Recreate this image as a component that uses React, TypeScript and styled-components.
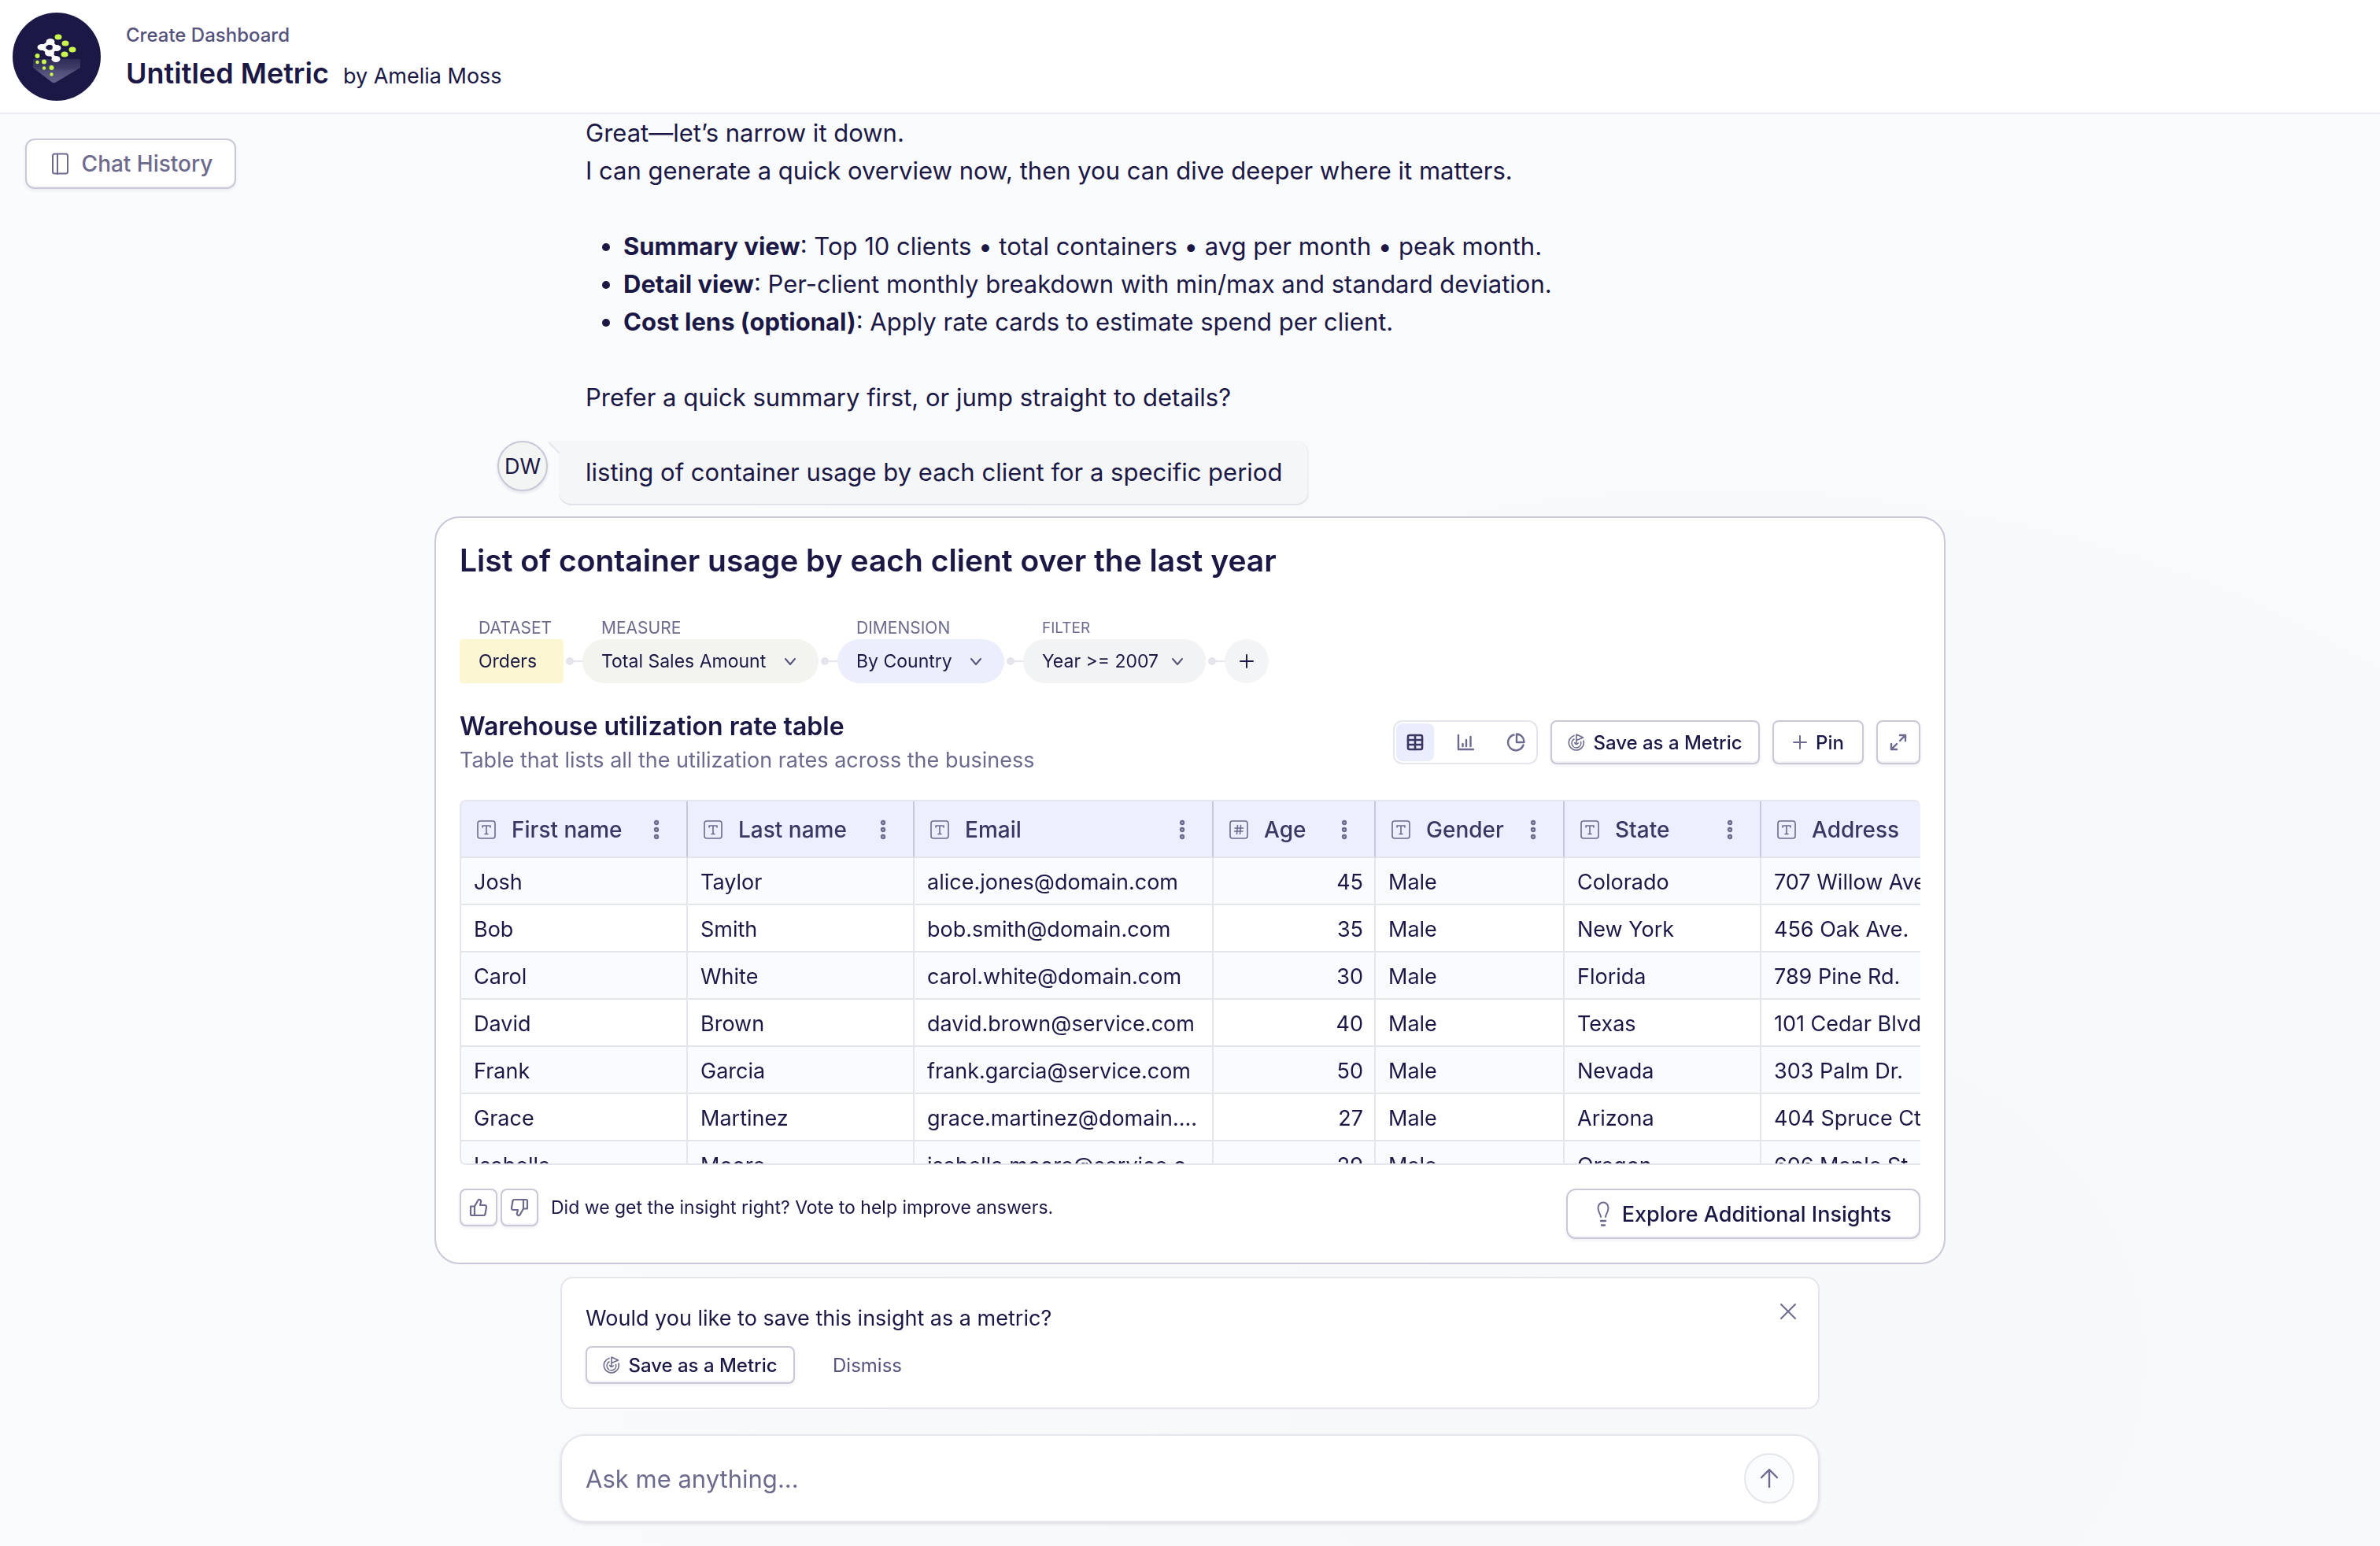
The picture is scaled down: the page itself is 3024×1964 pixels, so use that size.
import React from "react";
import styled, { createGlobalStyle } from "styled-components";

const c = {
  navy: "#1b1846",
  ink: "#3a3862",
  soft: "#55537d",
  muted: "#6c6a8d",
  line: "#c9c8d6",
  faint: "#e5e5ec",
  lilac: "#ecefff",
};

const GlobalStyle = createGlobalStyle`
  *, *::before, *::after { box-sizing: border-box; }
  body {
    margin: 0;
    font-family: Inter, "Liberation Sans", sans-serif;
    color: ${c.navy};
    background: #fafbfd;
  }
  h1, h2, h3, p, ul { margin: 0; }
  button, input, select { font-family: inherit; color: inherit; }
`;

const Page = styled.div`
  min-height: 100vh;
  display: flex;
  flex-direction: column;
  background: radial-gradient(ellipse at 72% 88%, #f7f8fa 0%, #f8f9fb 35%, #fafbfd 62%);
`;

const Header = styled.header`
  display: flex;
  align-items: center;
  gap: 32px;
  height: 145px;
  padding: 0 16px;
  background: #fff;
  border-bottom: 2px solid #e9edfb;
`;

const HeaderText = styled.div`
  display: flex;
  flex-direction: column;
  gap: 8px;
  padding-top: 4px;
`;

const Crumb = styled.a`
  font-size: 24px;
  line-height: 32px;
  font-weight: 500;
  color: ${c.soft};
  text-decoration: none;
`;

const TitleRow = styled.div`
  display: flex;
  align-items: baseline;
  gap: 18px;
`;

const PageTitle = styled.h1`
  font-size: 36px;
  line-height: 48px;
  font-weight: 600;
`;

const Author = styled.span`
  font-size: 27px;
  line-height: 44px;
`;

const Body = styled.div`
  flex: 1;
  display: grid;
  grid-template-columns: minmax(0, 1fr) minmax(0, 1920px) minmax(0, 1fr);
`;

const Side = styled.aside`
  padding: 31px 32px;
`;

const Button = styled.button<{ $h?: number; $w?: number; $size?: number; $gap?: number }>`
  display: inline-flex;
  align-items: center;
  justify-content: center;
  gap: ${(p) => p.$gap ?? 8}px;
  height: ${(p) => p.$h ?? 56}px;
  ${(p) => (p.$w ? `width: ${p.$w}px;` : "")}
  padding: 0;
  font-size: ${(p) => p.$size ?? 24}px;
  font-weight: 500;
  white-space: nowrap;
  background: #fff;
  border: 2px solid ${c.line};
  border-radius: 8px;
  box-shadow: 0 2px 4px rgba(27, 24, 70, 0.07), inset 0 -2px 0 #f3f3f6;
`;

const HistoryButton = styled(Button)`
  color: ${c.muted};
  border-radius: 12px;
`;

const ExploreButton = styled(Button)`
  border-radius: 12px;
`;

const TextButton = styled.button`
  height: 48px;
  padding: 0 24px;
  border: 0;
  background: none;
  font-size: 24px;
  color: ${c.soft};
`;

const Thread = styled.main`
  display: flex;
  flex-direction: column;
`;

const Answer = styled.section`
  padding: 0 192px 31px;
  font-size: 31px;
  line-height: 48px;
`;

const Points = styled.ul`
  margin: 48px 0;
  padding-left: 48px;
`;

const UserRow = styled.div`
  display: flex;
  gap: 14px;
  padding-left: 80px;
  margin-bottom: 16px;
`;

const Avatar = styled.div`
  display: grid;
  place-items: center;
  width: 64px;
  height: 64px;
  font-size: 27px;
  background: #f3f4f4;
  border: 2px solid ${c.line};
  border-radius: 50%;
  box-shadow: 0 2px 4px rgba(27, 24, 70, 0.12);
`;

const Bubble = styled.div`
  position: relative;
  padding: 16px 32px 16px 34px;
  font-size: 31px;
  line-height: 48px;
  background: #f5f6f8;
  border-right: 2px solid #eeeff4;
  border-radius: 0 16px 16px 16px;
  box-shadow: 0 2px 0 #e1e2ea;
`;

const Tail = styled.svg`
  position: absolute;
  left: -14px;
  top: 0;
`;

const Card = styled.section`
  padding: 30px;
  background: #fff;
  border: 2px solid ${c.line};
  border-radius: 32px;
`;

const CardTitle = styled.h2`
  font-size: 39px;
  line-height: 48px;
  font-weight: 600;
  margin-bottom: 50px;
`;

const Steps = styled.div`
  display: flex;
  align-items: flex-end;
  margin-bottom: 34px;
`;

const Step = styled.div`
  display: flex;
  flex-direction: column;
  gap: 2px;
`;

const StepLabel = styled.label<{ $small?: boolean }>`
  padding-left: 24px;
  font-size: ${(p) => (p.$small ? 19 : 21)}px;
  line-height: 24px;
  color: ${c.muted};
`;

const Dataset = styled.output`
  width: 132px;
  padding-left: 24px;
  font-size: 23px;
  line-height: 56px;
  background: #fcf6d3;
  border-radius: 4px;
`;

const PillWrap = styled.div`
  position: relative;
`;

const PillSelect = styled.select<{ $w: number; $bg: string }>`
  display: block;
  appearance: none;
  width: ${(p) => p.$w}px;
  height: 56px;
  padding: 0 0 0 24px;
  font-size: 23px;
  background: ${(p) => p.$bg};
  border: 0;
  border-radius: 28px;
`;

const PillChevron = styled.svg`
  position: absolute;
  right: 28px;
  top: 24px;
  pointer-events: none;
`;

const Link = styled.span`
  display: flex;
  align-items: center;
  width: 24px;
  height: 56px;
  padding-left: 3px;
  &::before {
    content: "";
    width: 10px;
    height: 10px;
    border-radius: 50%;
    background: #e4e4ec;
  }
  &::after {
    content: "";
    flex: 1;
    height: 2px;
    background: #e4e4ec;
  }
`;

const AddStep = styled.button`
  display: grid;
  place-items: center;
  width: 56px;
  height: 56px;
  padding: 0;
  border: 0;
  border-radius: 50%;
  background: #f3f4f5;
`;

const Between = styled.div<{ $start?: boolean }>`
  display: flex;
  justify-content: space-between;
  align-items: ${(p) => (p.$start ? "flex-start" : "center")};
`;

const SectionTitle = styled.h3`
  font-size: 32px;
  line-height: 42px;
  font-weight: 600;
  margin-bottom: 4px;
`;

const SectionNote = styled.p`
  font-size: 27px;
  line-height: 36px;
  color: ${c.muted};
`;

const Row = styled.div<{ $gap: number }>`
  display: flex;
  align-items: center;
  gap: ${(p) => p.$gap}px;
`;

const Toggle = styled.div`
  display: flex;
  align-items: center;
  gap: 16px;
  height: 56px;
  padding: 2px;
  border: 2px solid ${c.faint};
  border-radius: 12px;
`;

const ToggleItem = styled.button<{ $on?: boolean }>`
  display: grid;
  place-items: center;
  width: 48px;
  height: 48px;
  padding: 0;
  border: 0;
  border-radius: 8px;
  color: ${(p) => (p.$on ? c.ink : c.muted)};
  background: ${(p) => (p.$on ? "#e9edfd" : "#fff")};
`;

const TableFrame = styled.div`
  height: 464px;
  margin: 32px 0 30px;
  overflow: auto;
  scrollbar-width: none;
  border: 2px solid ${c.faint};
  border-right: 0;
  border-radius: 8px 8px 0 8px;
`;

const Table = styled.table`
  width: 1952px;
  table-layout: fixed;
  border-collapse: separate;
  border-spacing: 0;
  line-height: 36px;
`;

const Col = styled.col<{ $w: number }>`
  width: ${(p) => p.$w}px;
`;

const Th = styled.th`
  height: 72px;
  padding: 2px 34px 0 20px;
  font-size: 28px;
  font-weight: 500;
  color: ${c.ink};
  background: ${c.lilac};
  border-right: 2px solid ${c.line};
  border-bottom: 2px solid ${c.faint};
`;

const Tr = styled.tr`
  background: #fff;
  &:nth-child(odd) { background: #fafbff; }
`;

const Td = styled.td<{ $num?: boolean }>`
  height: 60px;
  padding: ${(p) => (p.$num ? "3px 14px 0 16px" : "3px 6px 0 16px")};
  font-size: 27px;
  text-align: ${(p) => (p.$num ? "right" : "left")};
  white-space: nowrap;
  overflow: hidden;
  text-overflow: ellipsis;
  border-right: 2px solid ${c.faint};
  border-bottom: 2px solid ${c.faint};
`;

const MenuButton = styled.button`
  display: grid;
  place-items: center;
  padding: 0;
  border: 0;
  background: none;
  color: ${c.muted};
`;

const VoteText = styled.p`
  padding-left: 12px;
  font-size: 23px;
  line-height: 48px;
`;

const Prompts = styled.div`
  padding: 16px 160px 30px;
  display: flex;
  flex-direction: column;
  gap: 32px;
`;

const Hint = styled.section`
  display: flex;
  justify-content: space-between;
  align-items: flex-start;
  height: 168px;
  padding: 30px 28px 30px 30px;
  background: #fff;
  border: 2px solid ${c.faint};
  border-radius: 16px;
`;

const HintText = styled.p`
  font-size: 27px;
  line-height: 42px;
  margin-bottom: 14px;
`;

const CloseButton = styled.button`
  display: grid;
  place-items: center;
  width: 20px;
  height: 24px;
  padding: 0;
  border: 0;
  background: none;
  color: ${c.muted};
`;

const AskForm = styled.form`
  display: flex;
  align-items: center;
  height: 112px;
  padding: 0 30px;
  background: #fff;
  border: 2px solid ${c.faint};
  border-radius: 32px;
  box-shadow: 0 2px 4px rgba(27, 24, 70, 0.12);
`;

const AskInput = styled.input`
  flex: 1;
  padding: 0;
  border: 0;
  outline: 0;
  background: none;
  font-size: 31px;
  &::placeholder { color: ${c.muted}; opacity: 1; }
`;

const SendButton = styled.button`
  display: grid;
  place-items: center;
  width: 64px;
  height: 64px;
  padding: 0;
  color: ${c.muted};
  background: #fbfcfe;
  border: 2px solid ${c.faint};
  border-radius: 50%;
`;

type IconProps = { w: number; h?: number; sw?: number; color?: string; children: React.ReactNode };
const Icon = ({ w, h = w, sw = 2, color = "currentColor", children }: IconProps) => (
  <svg width={w} height={h} viewBox={`0 0 ${w} ${h}`} fill="none" stroke={color} strokeWidth={sw} strokeLinecap="round" strokeLinejoin="round" aria-hidden="true">
    {children}
  </svg>
);

const Logo = () => (
  <svg width="112" height="112" viewBox="16 16 112 112" role="img" aria-label="Home">
    <defs>
      <linearGradient id="tray" x1="0" y1="0" x2="0" y2="1">
        <stop offset="0" stopColor="#2e2b58" />
        <stop offset="0.4" stopColor="#413e69" />
        <stop offset="0.5" stopColor="#504e78" />
        <stop offset="1" stopColor="#64628a" />
      </linearGradient>
    </defs>
    <circle cx="72" cy="72" r="56" fill={c.navy} />
    <path d="M42 75H102V86L71 104.500Q68.500 106 66 104.500L42 86Z" fill="url(#tray)" />
    <g fill="#fff">
      <ellipse cx="64" cy="53" rx="5.500" ry="4" />
      <ellipse cx="53" cy="60" rx="5.500" ry="4" />
      <ellipse cx="72" cy="61" rx="5.500" ry="4" />
      <ellipse cx="63" cy="67.500" rx="6" ry="4" />
      <ellipse cx="71" cy="75" rx="5.500" ry="4" />
    </g>
    <path d="M53 60L64 53M54 61L64 68M72 61L63 67M64 68L71 75M65 54L71 60" stroke="#fff" strokeWidth="4" />
    <g fill="#c9f64a">
      <ellipse cx="74" cy="47" rx="4.500" ry="3.500" />
      <ellipse cx="83" cy="55" rx="4.500" ry="3.500" />
      <ellipse cx="92" cy="63" rx="4.500" ry="3.500" />
      <ellipse cx="82" cy="69" rx="4.500" ry="3.500" />
      <circle cx="47.500" cy="71" r="3" />
      <circle cx="47.500" cy="79" r="2.200" />
      <circle cx="56" cy="78.500" r="3" />
      <circle cx="56" cy="86.500" r="2.200" />
      <circle cx="65.500" cy="86" r="3" />
      <circle cx="65.500" cy="94.500" r="2.200" />
    </g>
  </svg>
);

const PanelIcon = () => (
  <Icon w={28}><rect x="5" y="1.500" width="19" height="25" rx="2.500" /><path d="M11 2V27" /></Icon>
);
const GoalIcon = () => (
  <Icon w={22} color={c.muted} sw={1.6}>
    <path d="M8 2.400A9.500 9.500 0 1 0 20 9" />
    <path d="M8 7A5.800 5.800 0 1 0 16.500 10.500" />
    <path d="M11 12.500V1L19.500 5L11 8.500" />
    <path d="M8.800 11.500A2.400 2.400 0 0 0 13.300 12" />
  </Icon>
);
const TableIcon = () => (
  <Icon w={22} sw={2.6}><rect x="2" y="2" width="18" height="18" rx="2" /><path d="M2 8H20M2 14H20M11 2V20" /></Icon>
);
const ChartIcon = () => (
  <Icon w={22} sw={2.4}><path d="M2 2V20H21M7.500 16V13M12 16V8M17.500 16V4" /></Icon>
);
const PieIcon = () => (
  <Icon w={24} sw={2.4}><path d="M9.500 2.500A10 10 0 1 0 21.500 15.500" /><path d="M13 1.500V12H22.500A10 10 0 0 0 13 1.500Z" /></Icon>
);
const PlusIcon = ({ size, color }: { size: number; color: string }) => (
  <Icon w={size} color={color}><path d={`M${size / 2} 2V${size - 2}M2 ${size / 2}H${size - 2}`} /></Icon>
);
const ExpandIcon = () => (
  <Icon w={24} color={c.muted} sw={2.4}><path d="M14 3H21V10M21 3L14 10M3 14V21H10M3 21L10 14" /></Icon>
);
const TextIcon = () => (
  <Icon w={24} color={c.muted} sw={1.6}><rect x="1" y="1" width="22" height="22" rx="3" /><path d="M7 9V7H17V9M12 7V17.500M10 17.500H14" /></Icon>
);
const NumberIcon = () => (
  <Icon w={24} color={c.muted} sw={1.6}><rect x="1" y="1" width="22" height="22" rx="3" /><path d="M10.500 6.500L9.500 17.500M14.500 6.500L13.500 17.500M7 10H17.500M6.500 14H17" /></Icon>
);
const DotsIcon = () => (
  <Icon w={8} h={26} sw={2.4}><circle cx="4" cy="4" r="2" /><circle cx="4" cy="13" r="2" /><circle cx="4" cy="22" r="2" /></Icon>
);
const ThumbIcon = ({ down }: { down?: boolean }) => (
  <Icon w={24} color={c.muted} sw={2.2}>
    <g transform={down ? "rotate(180 12 12)" : undefined}>
      <path d="M2 10.500H7V22H3.500A1.500 1.500 0 0 1 2 20.500Z" />
      <path d="M7 10.500L11 3.500Q12 1.200 14 2.200Q15.500 3 15 5L14 9H20A2 2 0 0 1 22 11.300L20.500 20.200A2 2 0 0 1 18.500 22H7" />
    </g>
  </Icon>
);
const BulbIcon = () => (
  <Icon w={20} h={36} color={c.muted}>
    <path d="M7 22C7 18.500 3.500 16.500 3.500 10.500A6.500 7 0 0 1 16.500 10.500C16.500 16.500 13 18.500 13 22" />
    <path d="M7 27H13M8 32.500H12" strokeWidth="2.400" />
  </Icon>
);

const DropPill = ({ id, label, value, w, bg, small }: { id: string; label: string; value: string; w: number; bg: string; small?: boolean }) => (
  <>
    <Link />
    <Step>
      <StepLabel htmlFor={id} $small={small}>{label}</StepLabel>
      <PillWrap>
        <PillSelect id={id} $w={w} $bg={bg} defaultValue={value}>
          <option>{value}</option>
        </PillSelect>
        <PillChevron width="16" height="10" viewBox="0 0 16 10" fill="none" stroke={c.soft} strokeWidth="2" strokeLinecap="round" strokeLinejoin="round">
          <path d="M2 1L8 8L14 1" />
        </PillChevron>
      </PillWrap>
    </Step>
  </>
);

const columns = [
  { name: "First name", w: 288 },
  { name: "Last name", w: 288 },
  { name: "Email", w: 380 },
  { name: "Age", w: 206, num: true },
  { name: "Gender", w: 240 },
  { name: "State", w: 250 },
  { name: "Address", w: 300 },
];

const rows = [
  ["Josh", "Taylor", "alice.jones@domain.com", "45", "Male", "Colorado", "707 Willow Ave."],
  ["Bob", "Smith", "bob.smith@domain.com", "35", "Male", "New York", "456 Oak Ave."],
  ["Carol", "White", "carol.white@domain.com", "30", "Male", "Florida", "789 Pine Rd."],
  ["David", "Brown", "david.brown@service.com", "40", "Male", "Texas", "101 Cedar Blvd."],
  ["Frank", "Garcia", "frank.garcia@service.com", "50", "Male", "Nevada", "303 Palm Dr."],
  ["Grace", "Martinez", "grace.martinez@domain.com", "27", "Male", "Arizona", "404 Spruce Ct."],
  ["Isabella", "Moore", "isabella.moore@service.com", "29", "Male", "Oregon", "606 Maple St."],
];

export default function App() {
  return (
    <>
      <GlobalStyle />
      <Page>
        <Header>
          <Logo />
          <HeaderText>
            <Crumb href="#">Create Dashboard</Crumb>
            <TitleRow>
              <PageTitle>Untitled Metric</PageTitle>
              <Author>by Amelia Moss</Author>
            </TitleRow>
          </HeaderText>
        </Header>
        <Body>
          <Side>
            <HistoryButton $h={64} $w={268} $size={28} $gap={14}><PanelIcon />Chat History</HistoryButton>
          </Side>
          <Thread>
            <Answer>
              <p>Great—let’s narrow it down.</p>
              <p>I can generate a quick overview now, then you can dive deeper where it matters.</p>
              <Points>
                <li><b>Summary view</b>: Top 10 clients • total containers • avg per month • peak month.</li>
                <li><b>Detail view</b>: Per-client monthly breakdown with min/max and standard deviation.</li>
                <li><b>Cost lens (optional)</b>: Apply rate cards to estimate spend per client.</li>
              </Points>
              <p>Prefer a quick summary first, or jump straight to details?</p>
            </Answer>
            <UserRow>
              <Avatar>DW</Avatar>
              <Bubble>
                <Tail width="18" height="18" viewBox="0 0 18 18">
                  <path d="M0 0H18V17H16Z" fill="#f5f6f8" />
                  <path d="M1 2L15 16" stroke="#e6e7ee" strokeWidth="2" />
                </Tail>
                listing of container usage by each client for a specific period
              </Bubble>
            </UserRow>
            <Card>
              <CardTitle>List of container usage by each client over the last year</CardTitle>
              <Steps>
                <Step>
                  <StepLabel htmlFor="dataset">DATASET</StepLabel>
                  <Dataset id="dataset">Orders</Dataset>
                </Step>
                <DropPill id="measure" label="MEASURE" value="Total Sales Amount" w={300} bg="#f3f4f0" />
                <DropPill id="dimension" label="DIMENSION" value="By Country" w={212} bg="#eceefb" />
                <DropPill id="filter" label="FILTER" value="Year >= 2007" w={232} bg="#f2f3f4" small />
                <Link />
                <AddStep aria-label="Add step"><PlusIcon size={20} color={c.navy} /></AddStep>
              </Steps>
              <Between>
                <div>
                  <SectionTitle>Warehouse utilization rate table</SectionTitle>
                  <SectionNote>Table that lists all the utilization rates across the business</SectionNote>
                </div>
                <Row $gap={16}>
                  <Toggle>
                    <ToggleItem $on aria-label="Table"><TableIcon /></ToggleItem>
                    <ToggleItem aria-label="Bar chart"><ChartIcon /></ToggleItem>
                    <ToggleItem aria-label="Pie chart"><PieIcon /></ToggleItem>
                  </Toggle>
                  <Button $w={266} $gap={10}><GoalIcon />Save as a Metric</Button>
                  <Button $w={116} $gap={10}><PlusIcon size={20} color={c.muted} />Pin</Button>
                  <Button $w={56} aria-label="Expand"><ExpandIcon /></Button>
                </Row>
              </Between>
              <TableFrame>
                <Table>
                  <colgroup>{columns.map((col) => <Col key={col.name} $w={col.w} />)}</colgroup>
                  <thead>
                    <tr>
                      {columns.map((col) => (
                        <Th key={col.name} scope="col">
                          <Between>
                            <Row $gap={20}>{col.num ? <NumberIcon /> : <TextIcon />}{col.name}</Row>
                            <MenuButton aria-label={`${col.name} options`}><DotsIcon /></MenuButton>
                          </Between>
                        </Th>
                      ))}
                    </tr>
                  </thead>
                  <tbody>
                    {rows.map((row) => (
                      <Tr key={row[0]}>
                        {row.map((cell, i) => <Td key={i} $num={columns[i].num}>{cell}</Td>)}
                      </Tr>
                    ))}
                  </tbody>
                </Table>
              </TableFrame>
              <Between $start>
                <Row $gap={4}>
                  <Button $h={48} $w={48} aria-label="Yes"><ThumbIcon /></Button>
                  <Button $h={48} $w={48} aria-label="No"><ThumbIcon down /></Button>
                  <VoteText>Did we get the insight right? Vote to help improve answers.</VoteText>
                </Row>
                <ExploreButton $h={64} $w={450} $size={27} $gap={14}><BulbIcon />Explore Additional Insights</ExploreButton>
              </Between>
            </Card>
            <Prompts>
              <Hint>
                <div>
                  <HintText>Would you like to save this insight as a metric?</HintText>
                  <Row $gap={24}>
                    <Button $h={48} $w={266} $gap={10}><GoalIcon />Save as a Metric</Button>
                    <TextButton>Dismiss</TextButton>
                  </Row>
                </div>
                <CloseButton aria-label="Close"><Icon w={20}><path d="M1 1L19 19M19 1L1 19" /></Icon></CloseButton>
              </Hint>
              <AskForm onSubmit={(e) => e.preventDefault()}>
                <AskInput aria-label="Ask me anything" placeholder="Ask me anything..." />
                <SendButton aria-label="Send"><Icon w={24} sw={2.4}><path d="M12 23V1M2 11L12 1L22 11" /></Icon></SendButton>
              </AskForm>
            </Prompts>
          </Thread>
        </Body>
      </Page>
    </>
  );
}
